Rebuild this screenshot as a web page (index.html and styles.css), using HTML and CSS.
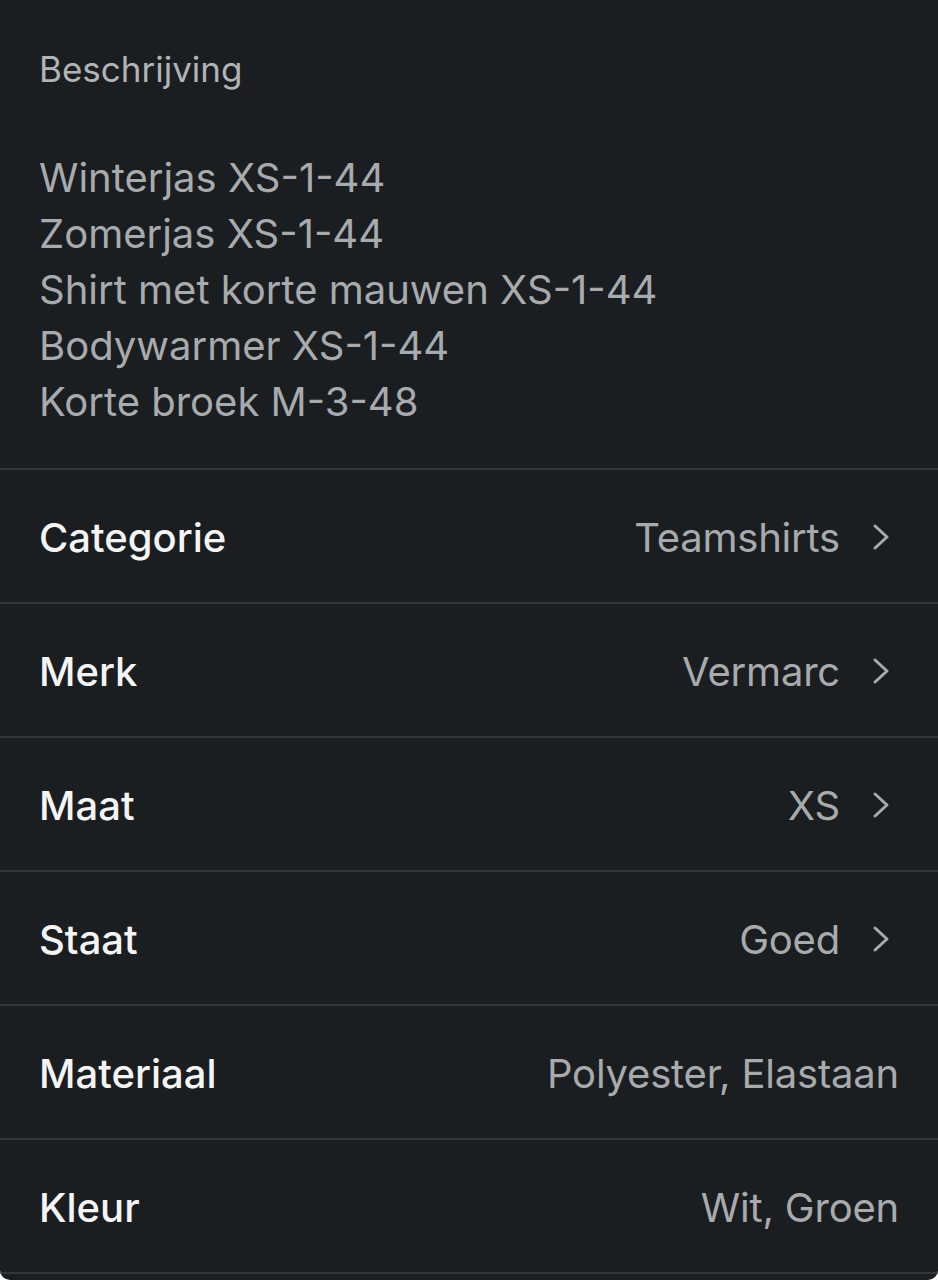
FILE: index.html
```html
<!DOCTYPE html>
<html lang="nl">
<head>
    <meta charset="UTF-8">
    <title>Artikel details</title>
    <meta name="viewport" content="width=device-width, initial-scale=1.0">
    <link rel="stylesheet" href="styles.css">
</head>
<body>
    <div class="card">
        <div class="description">
            <div class="description-title">Beschrijving</div>
            <div class="description-text">
                Winterjas XS-1-44<br>
                Zomerjas XS-1-44<br>
                Shirt met korte mauwen XS-1-44<br>
                Bodywarmer XS-1-44<br>
                Korte broek M-3-48
            </div>
        </div>

        <div class="row">
            <span class="label">Categorie</span>
            <span class="value">Teamshirts</span>
            <svg class="chevron" viewBox="0 0 28 28"><polyline points="6,3 18,14 6,25"/></svg>
        </div>
        <div class="row">
            <span class="label">Merk</span>
            <span class="value">Vermarc</span>
            <svg class="chevron" viewBox="0 0 28 28"><polyline points="6,3 18,14 6,25"/></svg>
        </div>
        <div class="row">
            <span class="label">Maat</span>
            <span class="value">XS</span>
            <svg class="chevron" viewBox="0 0 28 28"><polyline points="6,3 18,14 6,25"/></svg>
        </div>
        <div class="row">
            <span class="label">Staat</span>
            <span class="value">Goed</span>
            <svg class="chevron" viewBox="0 0 28 28"><polyline points="6,3 18,14 6,25"/></svg>
        </div>
        <div class="row">
            <span class="label">Materiaal</span>
            <span class="value">Polyester, Elastaan</span>
        </div>
        <div class="row">
            <span class="label">Kleur</span>
            <span class="value">Wit, Groen</span>
        </div>
    </div>
</body>
</html>
```

FILE: styles.css
```css
* {
    margin: 0;
    padding: 0;
    box-sizing: border-box;
}
body {
    font-family: 'Inter', 'Noto Sans', sans-serif;
    background: #ffffff;
}
.card {
    background: #1b1e20;
    height: 1280px;
    border-radius: 0 0 10px 10px;
    overflow: hidden;
}
.description {
    padding: 45px 40px 38px 39px;
    border-bottom: 2px solid #33373a;
}
.description-title {
    font-size: 35px;
    line-height: 48px;
    color: #b1b4b6;
    margin-bottom: 57px;
}
.description-text {
    font-size: 40px;
    line-height: 56px;
    color: #a8abad;
}
.row {
    display: flex;
    align-items: center;
    height: 134px;
    padding: 2px 39px 0 39px;
    border-bottom: 2px solid #33373a;
}
.label {
    font-size: 40px;
    font-weight: 500;
    color: #f4f4f4;
    flex: 1;
}
.value {
    font-size: 40px;
    letter-spacing: -0.2px;
    color: #a8abad;
}
.chevron {
    width: 28px;
    height: 28px;
    margin-left: 29px;
    margin-right: 2px;
    fill: none;
    stroke: #a8abad;
    stroke-width: 3;
    stroke-linecap: round;
    stroke-linejoin: round;
}
```
